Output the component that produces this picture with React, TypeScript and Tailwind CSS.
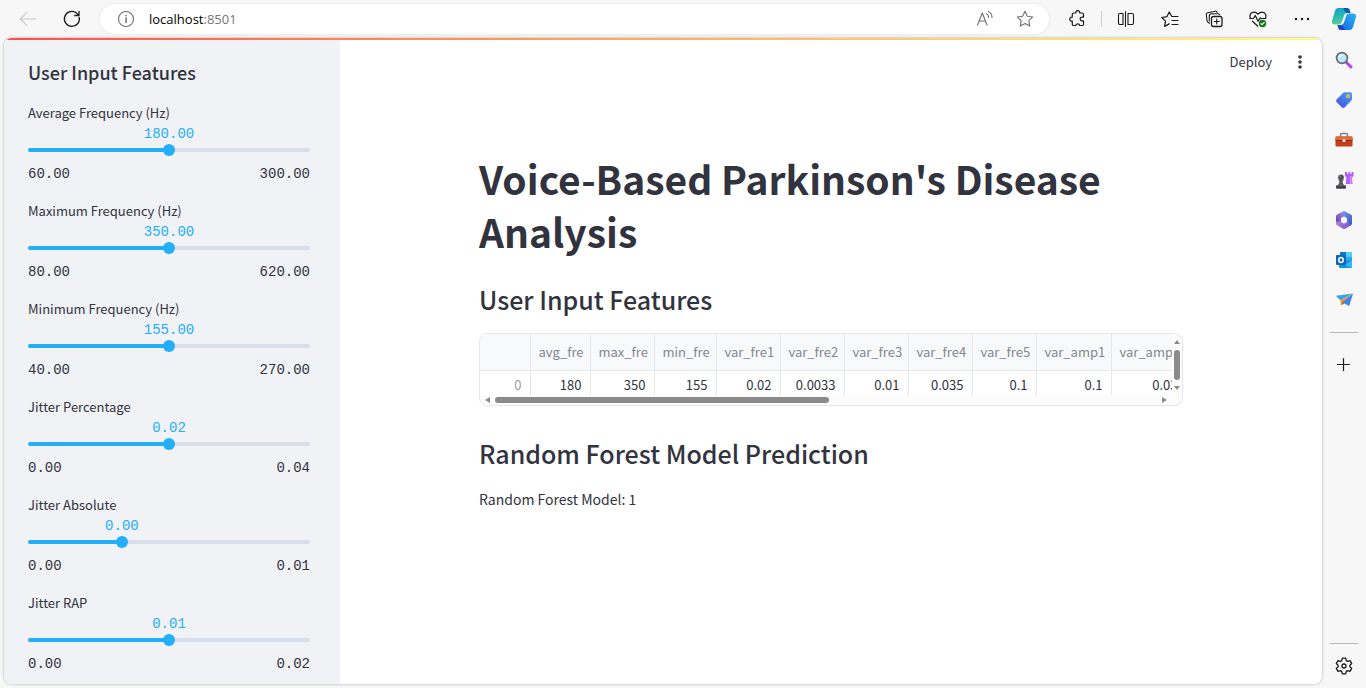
import { useState } from "react";
import type { ReactNode } from "react";

type Feature = { label: string; min: number; max: number; value: number };

const FEATURES: Feature[] = [
  { label: "Average Frequency (Hz)", min: 60, max: 300, value: 180 },
  { label: "Maximum Frequency (Hz)", min: 80, max: 620, value: 350 },
  { label: "Minimum Frequency (Hz)", min: 40, max: 270, value: 155 },
  { label: "Jitter Percentage", min: 0, max: 0.04, value: 0.02 },
  { label: "Jitter Absolute", min: 0, max: 0.01, value: 0.00333 },
  { label: "Jitter RAP", min: 0, max: 0.02, value: 0.01 },
];

const COLUMNS = [
  { name: "avg_fre", width: "w-[60px]" },
  { name: "max_fre", width: "w-[64px]" },
  { name: "min_fre", width: "w-[62px]" },
  { name: "var_fre1", width: "w-[64px]" },
  { name: "var_fre2", width: "w-[64px]" },
  { name: "var_fre3", width: "w-[64px]" },
  { name: "var_fre4", width: "w-[64px]" },
  { name: "var_fre5", width: "w-[64px]" },
  { name: "var_amp1", width: "w-[75px]" },
  { name: "var_amp2", width: "w-[75px]" },
];

const FIXED_VALUES = ["0.035", "0.1", "0.1", "0.03"];

function IconButton({ label, className, children }: { label: string; className: string; children: ReactNode }) {
  return (
    <button type="button" aria-label={label} className={"flex shrink-0 items-center justify-center " + className}>
      {children}
    </button>
  );
}

function Line({ children, className = "text-[#1b1b1b]", size = 20 }: { children: ReactNode; className?: string; size?: number }) {
  return (
    <svg width={size} height={size} viewBox="0 0 20 20" fill="none" stroke="currentColor" strokeWidth="1.1" strokeLinecap="round" strokeLinejoin="round" className={className}>
      {children}
    </svg>
  );
}

const STAR = "M10 2.3l2.35 4.9 5.35.75-3.9 3.75.95 5.35L10 14.5l-4.75 2.55.95-5.35L2.3 7.95l5.35-.75z";

function CopilotIcon() {
  return (
    <svg width="26" height="24" viewBox="0 0 26 24">
      <defs>
        <linearGradient id="cpA" x1="0" y1="0" x2="0.3" y2="1">
          <stop offset="0" stopColor="#1a93d8" />
          <stop offset="0.5" stopColor="#22b5b8" />
          <stop offset="1" stopColor="#5fd08a" />
        </linearGradient>
        <linearGradient id="cpB" x1="1" y1="0" x2="0" y2="1">
          <stop offset="0" stopColor="#2fb4f5" />
          <stop offset="1" stopColor="#0d62e0" />
        </linearGradient>
      </defs>
      <path d="M7.5 1h8.2c1.8 0 2.6 1 3.1 2.600l.7 2.400h-3c-2 0-3 1-3.600 3l-1.900 5.800c-.6 1.800-1.600 2.700-3.400 2.700H4C1.600 17.500.4 16 1.100 13.500L4 4c.6-2 1.700-3 3.500-3z" fill="url(#cpA)" />
      <path d="M12.500 1h3.200c1.800 0 2.600 1 3.100 2.600l.7 2.400h-2.800c-2.500 0-3.600-2.500-4.200-5z" fill="#0b5fae" />
      <path d="M18.500 23h-8.200c-1.800 0-2.600-1-3.100-2.600l-.7-2.400h3c2 0 3-1 3.600-3L15 9.200c.6-1.800 1.600-2.700 3.400-2.700H22c2.400 0 3.600 1.500 2.900 4L22 20c-.6 2-1.700 3-3.500 3z" fill="url(#cpB)" />
      <path d="M13.500 23h-3.200c-1.800 0-2.600-1-3.100-2.600L6.500 18h2.700c2.500 0 3.700 2.500 4.300 5z" fill="#1c46c8" />
    </svg>
  );
}

function SearchIcon() {
  return (
    <svg width="18" height="18" viewBox="0 0 18 18">
      <path d="M11 11l5 5" stroke="#b444f0" strokeWidth="3" strokeLinecap="round" />
      <path d="M10.300 10.300l1.700 1.700" stroke="#777" strokeWidth="2" />
      <circle cx="7" cy="7" r="5.400" fill="#bfe6fa" stroke="#666b70" strokeWidth="1.700" />
      <path d="M4.300 6.500a3 3 0 0 1 2.300-2.300" stroke="#fff" strokeWidth="1.200" fill="none" strokeLinecap="round" />
    </svg>
  );
}

function TagIcon() {
  return (
    <svg width="18" height="18" viewBox="0 0 18 18">
      <defs>
        <linearGradient id="tag" x1="1" y1="0" x2="0.200" y2="1">
          <stop offset="0" stopColor="#49a2f5" />
          <stop offset="1" stopColor="#4454e8" />
        </linearGradient>
      </defs>
      <path d="M9.800 1.200h5.700c.9 0 1.500.6 1.500 1.500v5.200c0 .7-.2 1.200-.7 1.700l-6.500 6.600c-.9.9-2.100.9-3 0l-5-5c-.9-.9-.9-2 0-2.900l6.500-6.500c.4-.4.900-.6 1.500-.6z" fill="url(#tag)" />
      <circle cx="13" cy="5.200" r="1.900" fill="#f9cf4a" />
      <circle cx="13" cy="5.200" r=".8" fill="#8e8660" />
    </svg>
  );
}

function ToolboxIcon() {
  return (
    <svg width="18" height="16" viewBox="0 0 18 16">
      <path d="M5.500 5V3c0-1 .6-1.500 1.500-1.500h4c.9 0 1.500.5 1.500 1.500v2" fill="none" stroke="#7b7f83" strokeWidth="1.500" />
      <rect x=".5" y="4.500" width="17" height="10" rx="1.300" fill="#c43f16" />
      <path d="M1.800 4.500h14.400c.8 0 1.300.5 1.300 1.300V8H.5V5.800c0-.8.5-1.300 1.300-1.300z" fill="#e0683a" />
      <path d="M.5 8h17v1H.5z" fill="#91290f" />
      <rect x="7.500" y="7" width="3" height="3" rx=".5" fill="#d5d8da" />
    </svg>
  );
}

function ChessIcon() {
  return (
    <svg width="19" height="19" viewBox="0 0 19 19">
      <path d="M10 1h2v2h1.300V1h2v2h1.300V1h1.900v4l-1.500 1.500.5 6.500H10.800l.6-6.500L10 5z" fill="#b45df3" />
      <path d="M14.800 5h2v8h-2z" fill="#d08cff" />
      <circle cx="6" cy="6.200" r="2.800" fill="#4c4c4f" />
      <path d="M3.500 8.300h5v1.400H7.600c0 2 .4 3.300 1.700 4.600H2.700c1.300-1.300 1.700-2.600 1.700-4.600h-.9z" fill="#5a5a5d" />
      <rect x="1" y="14.300" width="10" height="3.500" rx="1" fill="#424245" />
      <circle cx="5.200" cy="5.300" r="1" fill="#87878a" />
    </svg>
  );
}

function M365Icon() {
  return (
    <svg width="18" height="20" viewBox="0 0 18 20">
      <defs>
        <linearGradient id="mA" x1="0" y1="1" x2="1" y2="0">
          <stop offset="0" stopColor="#5b45b0" />
          <stop offset="1" stopColor="#b98ae6" />
        </linearGradient>
        <linearGradient id="mB" x1="0" y1="0" x2="1" y2="1">
          <stop offset="0" stopColor="#6fa0f0" />
          <stop offset="1" stopColor="#3a50c0" />
        </linearGradient>
        <linearGradient id="mC" x1="0" y1="0" x2="1" y2="0.300">
          <stop offset="0" stopColor="#b884dc" />
          <stop offset="1" stopColor="#7a5bc8" />
        </linearGradient>
      </defs>
      <path d="M8.200 1.400L10.500 2 11 5.500 6 8v3.500L1 13V6.400c0-.8.400-1.400 1.100-1.800z" fill="url(#mA)" />
      <path d="M8.200 1.400c.6-.3 1.300-.3 1.900 0l5.800 3.200c.7.400 1.100 1 1.100 1.800v7c0 .8-.4 1.500-1.100 1.900l-1.400.8-2.500-4.300V8.400L9 6.600 8 5.500c-1.200-1.300-1-3.300.2-4.100z" fill="url(#mB)" />
      <path d="M1 11.700l5-.1 3 1.900 3-1.700 4 3.400-5.800 3.500c-.7.400-1.500.4-2.200 0l-5.900-3.400C1.400 14.900 1 14.200 1 13.400z" fill="url(#mC)" />
      <path d="M9 6.600l3 1.800v3.400l-3 1.800-3-1.800V8.400z" fill="#f7f7f7" />
    </svg>
  );
}

function OutlookIcon() {
  return (
    <svg width="18" height="18" viewBox="0 0 18 18">
      <rect x="5" y="1" width="12" height="11" rx="1" fill="#28a8ea" />
      <path d="M5 2c0-.6.4-1 1-1h5v5H5z" fill="#0f78d4" />
      <path d="M11 1h5c.6 0 1 .4 1 1v4h-6z" fill="#4fd0fb" />
      <path d="M4 9.500h13V16c0 .6-.4 1-1 1H5c-.6 0-1-.4-1-1z" fill="#1490df" />
      <path d="M17 9.500l-7.500 4.300L16 17c.6 0 1-.4 1-1z" fill="#35b8f1" />
      <rect x="1" y="4" width="10" height="10" rx="1" fill="#0d64b8" />
      <ellipse cx="6" cy="9" rx="2.200" ry="2.500" fill="none" stroke="#fff" strokeWidth="1.500" />
    </svg>
  );
}

function SendIcon() {
  return (
    <svg width="19" height="16" viewBox="0 0 19 16">
      <path d="M.8 3.800L18 1.500 5.500 8.500z" fill="#35a6ee" />
      <path d="M5.500 8.300L18 1.500 7.600 10.500 5.800 13.200z" fill="#f59a23" />
      <path d="M5.800 13.200l1.800-3.500 2.400 1.700z" fill="#c46c12" />
      <path d="M18 1.500l-3.800 12.800-6.800-4.200z" fill="#3d86e8" />
    </svg>
  );
}

function BrowserBar() {
  return (
    <header className="flex h-[38px] shrink-0 items-center pl-1.5 pr-0.5">
      <IconButton label="Back" className="h-8 w-11">
        <Line className="text-[#c8c8c8]"><path d="M18 10H2.300M9 3.300L2.200 10 9 16.700" /></Line>
      </IconButton>
      <IconButton label="Refresh" className="h-8 w-11">
        <Line><path d="M17.200 8.300A7.500 7.500 0 1 1 13.800 3.500l2.700 2.600M17 2.300v4.200h-4.200" strokeWidth="1.300" /></Line>
      </IconButton>
      <div className="ml-1.5 mr-1.5 flex h-[30px] flex-1 items-center rounded-full bg-white pl-4 pr-1 shadow-[0_0_3px_rgba(0,0,0,0.1)]">
        <Line className="text-[#707070]">
          <circle cx="10" cy="10" r="7.500" />
          <path d="M10 9v4.500" strokeWidth="1.500" />
          <path d="M10 6.500v.1" strokeWidth="1.700" />
        </Line>
        <a href="http://localhost:8501" className="ml-[13px] flex-1 font-['Open_Sans',sans-serif] text-[13px] leading-5 text-black">
          localhost<span className="text-[#767676]">:8501</span>
        </a>
        <IconButton label="Read aloud" className="h-7 w-10">
          <Line className="text-[#707070]"><path d="M2.500 16L7.300 4 12 16M4.200 12h6.200M11.500 4.600c1.400.9 2.100 2.200 2.100 4M13.500 2.500c2.200 1.200 3.500 3.300 3.500 6" /></Line>
        </IconButton>
        <IconButton label="Add to favorites" className="h-7 w-10">
          <Line className="text-[#707070]"><path d={STAR} /></Line>
        </IconButton>
      </div>
      <IconButton label="Extensions" className="h-8 w-11">
        <Line><path d="M6.500 4h2.300a2 2 0 1 1 3.900 0h2.600c.7 0 1.200.5 1.200 1.200v3h-1a1.900 1.900 0 1 0 0 3.700h1v3.400c0 .7-.5 1.200-1.200 1.200h-2.600a2 2 0 0 0-3.900 0H6.500c-.7 0-1.200-.5-1.200-1.200V12.200a2.100 2.100 0 1 1 0-4.100V5.200c0-.7.500-1.200 1.200-1.200z" strokeWidth="1.200" /></Line>
      </IconButton>
      <span className="mx-0.5 h-4 w-px bg-[#cfcfcf]" />
      <IconButton label="Split screen" className="h-8 w-11">
        <Line><path d="M9.500 2.500v15M7 4.500H4A1.500 1.500 0 0 0 2.500 6v8A1.500 1.500 0 0 0 4 15.500h3M12 4.500h4A1.500 1.500 0 0 1 17.500 6v8a1.500 1.500 0 0 1-1.500 1.500h-4M7 4.500v11M12 4.500v11" /></Line>
      </IconButton>
      <IconButton label="Favorites" className="h-8 w-11">
        <Line><path d="M15.500 7.500h-3.700L9.200 3 6.900 7.700l-5.100.8 3.700 3.700-.9 5.200 4.600-2.500M12 7.500h6M12 11.500h6M12 15.500h6" strokeWidth="1.200" /></Line>
      </IconButton>
      <IconButton label="Collections" className="h-8 w-11">
        <Line>
          <rect x="7.500" y="7.500" width="10.500" height="10" rx="2" strokeWidth="1.300" />
          <path d="M12.750 10v5M10.200 12.500h5.100M5.500 14.200L4 13.200c-.7-.5-1-.9-1-1.700L2.300 5.600C2.200 4.600 2.700 4 3.600 3.700l7.600-1.500c1-.2 1.700.3 2 1.200M5.300 12V7c0-1.500.8-2.300 2.300-2.300h6.200c1 0 1.700.4 2 1.200" />
        </Line>
      </IconButton>
      <IconButton label="Browser essentials" className="h-8 w-11">
        <Line>
          <path d="M17.300 9.500c1.100-2.200.6-4.500-1.100-5.700-2-1.300-4.400-.7-6.200 1.400C8.200 3.100 5.800 2.500 3.800 3.800 2 5 1.500 7.300 2.700 9.500M1.800 9.500h3.500l2-3 2.800 5.700 2.200-3.400 1 .7h4.500M4.500 12.200l5.300 5" strokeWidth="1.200" />
          <circle cx="14.500" cy="14.500" r="3.700" fill="#0f7b1e" stroke="none" />
          <path d="M13 14.700l1 1 2.200-2.200" stroke="#fff" />
        </Line>
      </IconButton>
      <IconButton label="Settings and more" className="h-8 w-11">
        <Line><path d="M4 10h.01M10 10h.01M16 10h.01" strokeWidth="2.400" /></Line>
      </IconButton>
      <IconButton label="Copilot" className="h-8 w-10"><CopilotIcon /></IconButton>
    </header>
  );
}

function EdgeSidebar() {
  const cell = "h-10 w-full";
  return (
    <aside className="flex w-11 shrink-0 flex-col items-center pb-0.5 pt-0.5">
      <IconButton label="Search" className={cell}><SearchIcon /></IconButton>
      <IconButton label="Shopping" className={cell}><TagIcon /></IconButton>
      <IconButton label="Tools" className={cell}><ToolboxIcon /></IconButton>
      <IconButton label="Games" className={cell}><ChessIcon /></IconButton>
      <IconButton label="Microsoft 365" className={cell}><M365Icon /></IconButton>
      <IconButton label="Outlook" className={cell}><OutlookIcon /></IconButton>
      <IconButton label="Drop" className={cell}><SendIcon /></IconButton>
      <hr className="mb-3 mt-3 w-7 border-[#b9b9b9]" />
      <IconButton label="Customize" className={cell}>
        <Line><path d="M9.500 3.500v12M3.500 9.500h12" strokeWidth="1.200" /></Line>
      </IconButton>
      <hr className="mb-0.5 mt-auto w-7 border-[#b9b9b9]" />
      <IconButton label="Settings" className={cell}>
        <Line>
          <circle cx="10" cy="10" r="2" strokeWidth="1.300" />
          <path d="M8.300 2.200h3.400l.6 2.400 1.300.8 2.400-.7 1.700 2.900-1.800 1.700v1.400l1.800 1.700-1.700 2.900-2.400-.7-1.300.8-.6 2.400H8.300l-.6-2.400-1.300-.8-2.400.7-1.700-2.900 1.800-1.700V9.300L2.300 7.600 4 4.700l2.400.7 1.300-.8z" strokeWidth="1.300" />
        </Line>
      </IconButton>
    </aside>
  );
}

function FeatureSlider({ feature, value, onChange, id }: { feature: Feature; value: number; onChange: (v: number) => void; id: string }) {
  const percent = ((value - feature.min) / (feature.max - feature.min)) * 100;
  return (
    <div>
      <label htmlFor={id} className="block text-[13px] leading-5">{feature.label}</label>
      <div className="relative mt-0.5 h-[18px] font-['Liberation_Mono',monospace] text-sm leading-[18px] text-[#23aefa]">
        <output htmlFor={id} className="absolute -translate-x-1/2" style={{ left: percent + "%" }}>{value.toFixed(2)}</output>
      </div>
      <div className="relative flex h-3.5 items-center">
        <div className="h-1 w-full overflow-hidden rounded-full bg-[#d9dfea]">
          <div className="h-full bg-[#23aefa]" style={{ width: percent + "%" }} />
        </div>
        <input
          id={id}
          type="range"
          min={feature.min}
          max={feature.max}
          step="any"
          value={value}
          onChange={(e) => onChange(Number(e.target.value))}
          className="absolute -inset-x-1.5 inset-y-0 cursor-pointer appearance-none bg-transparent [&::-webkit-slider-thumb]:size-3 [&::-webkit-slider-thumb]:appearance-none [&::-webkit-slider-thumb]:rounded-full [&::-webkit-slider-thumb]:bg-[#23aefa]"
        />
      </div>
      <div className="mt-[7px] flex justify-between font-['Liberation_Mono',monospace] text-sm leading-5">
        <span>{feature.min.toFixed(2)}</span>
        <span>{feature.max.toFixed(2)}</span>
      </div>
    </div>
  );
}

function DataTable({ values }: { values: string[] }) {
  return (
    <div className="mt-[17px] overflow-hidden rounded-lg border border-[#e6e7ea] bg-[#fcfcfc] text-[13px]">
      <div className="flex">
        <div className="h-[61px] flex-1 overflow-hidden bg-white">
          <table className="w-[706px] table-fixed border-collapse">
            <thead>
              <tr className="h-9 bg-[#f8f9fb] text-[#84868e]">
                <th className="w-[50px] border-b border-r border-[#e6e7ea]" aria-label="Index" />
                {COLUMNS.map((c) => (
                  <th key={c.name} className={"border-b border-r border-[#e6e7ea] px-2 py-0 text-right font-normal leading-5 " + c.width}>{c.name}</th>
                ))}
              </tr>
            </thead>
            <tbody>
              <tr className="h-[29px]">
                <th className="border-r border-[#e6e7ea] px-2 py-0 text-right font-normal leading-5 text-[#9a9ca4]">0</th>
                {values.map((v, i) => (
                  <td key={COLUMNS[i].name} className="border-r border-[#e6e7ea] px-2 py-0 text-right leading-5">{v}</td>
                ))}
              </tr>
            </tbody>
          </table>
        </div>
        <div className="flex w-2.5 shrink-0 flex-col items-center pt-1.5">
          <svg width="6" height="4" viewBox="0 0 6 4" fill="#8b8b8b"><path d="M3 0l3 4H0z" /></svg>
          <div className="mt-1.5 h-[30px] w-1.5 rounded-full bg-[#8b8b8b]" />
          <svg width="6" height="4" viewBox="0 0 6 4" fill="#8b8b8b" className="mt-1.5"><path d="M3 4l3-4H0z" /></svg>
        </div>
      </div>
      <div className="flex h-2.5 items-center pl-[5px] pr-[15px]">
        <svg width="5" height="6" viewBox="0 0 5 6" fill="#8b8b8b"><path d="M0 3l5-3v6z" /></svg>
        <div className="ml-[5px] h-1.5 w-[49%] rounded-full bg-[#8b8b8b]" />
        <svg width="5" height="6" viewBox="0 0 5 6" fill="#8b8b8b" className="ml-auto"><path d="M5 3L0 0v6z" /></svg>
      </div>
    </div>
  );
}

export default function App() {
  const [values, setValues] = useState(FEATURES.map((f) => f.value));
  const row = [...values.map((v) => String(Number(v.toFixed(4)))), ...FIXED_VALUES];

  return (
    <div className="flex h-screen flex-col bg-[#f7f7f7] font-['Noto_Sans_CJK_SC','Noto_Sans',sans-serif] text-[#31333f]">
      <BrowserBar />
      <div className="flex min-h-0 flex-1">
        <div className="mb-1 ml-1 flex min-w-0 flex-1 flex-col overflow-hidden rounded-lg bg-white shadow-[0_0_3px_rgba(0,0,0,0.3)]">
          <div className="h-0.5 shrink-0 bg-linear-to-r from-[#ff4b4b] to-[#fffd80]" />
          <div className="flex min-h-0 flex-1">
            <section className="w-[336px] shrink-0 overflow-hidden bg-[#f0f2f6] pl-6 pr-[30px] pt-5">
              <h2 className="text-lg font-medium leading-6">User Input Features</h2>
              <div className="mt-[19px] flex flex-col gap-[17px]">
                {FEATURES.map((f, i) => (
                  <FeatureSlider
                    key={f.label}
                    id={"feature-" + i}
                    feature={f}
                    value={values[i]}
                    onChange={(v) => setValues(values.map((old, j) => (j === i ? v : old)))}
                  />
                ))}
              </div>
            </section>
            <main className="min-w-0 flex-1">
              <div className="flex h-11 items-center justify-end gap-[18px] pr-3">
                <button type="button" className="text-[13px] leading-5">Deploy</button>
                <IconButton label="Main menu" className="h-6 w-5">
                  <svg width="4" height="14" viewBox="0 0 4 14" fill="currentColor"><circle cx="2" cy="2" r="1.800" /><circle cx="2" cy="7" r="1.800" /><circle cx="2" cy="12" r="1.800" /></svg>
                </IconButton>
              </div>
              <div className="mx-auto max-w-[736px] px-4 pt-[68px]">
                <h1 className="text-[39px] font-bold leading-[53px]">Voice-Based Parkinson's Disease Analysis</h1>
                <h2 className="mt-6 text-[25px] font-medium leading-[34px]">User Input Features</h2>
                <DataTable values={row} />
                <h2 className="mt-[30px] text-[25px] font-medium leading-[34px]">Random Forest Model Prediction</h2>
                <p className="mt-[17px] text-sm leading-6">Random Forest Model: 1</p>
              </div>
            </main>
          </div>
        </div>
        <EdgeSidebar />
      </div>
    </div>
  );
}
